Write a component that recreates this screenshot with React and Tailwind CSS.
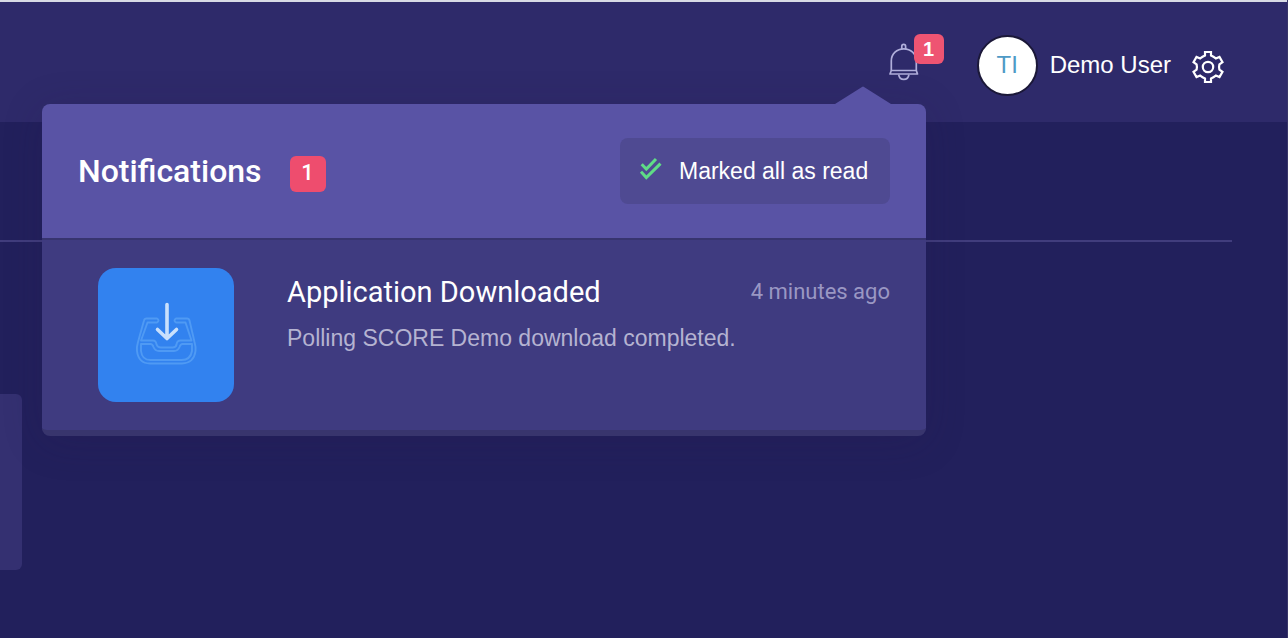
import React, { useState } from "react";

const BellIcon = () => (
  <svg width="30" height="38" viewBox="0 0 30 38" fill="none" stroke="#b1afdb" strokeWidth="1.7" aria-hidden="true">
    <path d="M12.800 6V3.200a1.900 1.900 0 0 1 3.800 0V6" />
    <path d="M2.300 27.500V18C2.300 10.500 8 5.800 14.800 5.800S27.300 10.500 27.300 18v9.500" />
    <path d="M2.300 27.500H27.300L28.500 31H1Z" strokeLinejoin="round" />
    <path d="M9.700 31.600c.4 3 2.500 4.800 5.100 4.800s4.700-1.800 5.100-4.800" />
  </svg>
);

const GearIcon = () => (
  <svg width="34" height="34" viewBox="-17 -17 34 34" fill="none" stroke="#fff" strokeWidth="2.2" strokeLinejoin="miter" aria-hidden="true">
    <path d="M-3-15H3V-11.500Q5.500-10.400 7.800-8.600L11.500-10.100L14.500-4.900L11.400-2.600Q10.700 0 11.400 2.600L14.500 4.900L11.500 10.100L7.800 8.600Q5.500 10.400 3 11.500V15H-3V11.500Q-5.500 10.400-7.800 8.600L-11.500 10.100L-14.500 4.900L-11.400 2.600Q-10.700 0-11.400-2.600L-14.500-4.900L-11.500-10.100L-7.800-8.600Q-5.500-10.400-3-11.500Z" />
    <circle r="5.200" />
  </svg>
);

const DoubleCheckIcon = () => (
  <svg className="mb-1" width="22" height="24" viewBox="0 0 22 24" fill="none" stroke="#5fdc86" strokeWidth="3" aria-hidden="true">
    <path d="M1.700 7.300L6.300 12L16 2" />
    <path d="M1 14.700L6.300 20.500L20.500 6.700" />
  </svg>
);

const DownloadIcon = () => (
  <svg width="64" height="66" viewBox="0 0 64 66" fill="none" strokeLinecap="round" strokeLinejoin="round" aria-hidden="true">
    {/* tray */}
    <g stroke="#4f9af4" strokeWidth="1.900">
      <path d="M23 16.500H12.500Q10.500 16.500 10 18.500L4 40Q2.500 45 3 49Q4.500 61.500 16 61.500H48Q60 61 61.500 49Q62 45 60.500 40L55.500 18.500Q55 16.500 53 16.500H42Q39 18.500 42 20.500H51.500L57.500 38.500H46.500Q43 38.500 42.500 42.500Q42 45.500 38.500 45.500H27Q23.500 45.500 22.500 42.500Q22 38.500 19 38.500H7L13.500 20.500H23Q26 18.500 23 16.500Z" />
      <path d="M7 42H16.500Q18.500 42 19.500 45Q21 49 25 49H40Q44 49 45.500 45Q46.500 42 48.500 42H58V49Q56.500 58 47.500 58H16.500Q8 58 7 49Z" />
    </g>
    {/* arrow */}
    <path d="M33 2.500V36.500M23.500 27.500L33 36.500L42.500 27.500" stroke="#c9e0fc" strokeWidth="3.600" />
  </svg>
);

const notifications = [
  {
    id: 1,
    title: "Application Downloaded",
    message: "Polling SCORE Demo download completed.",
    time: "4 minutes ago",
  },
];

const NotificationPanel = ({ items }) => (
  <section
    aria-label="Notifications"
    className="absolute right-[361px] top-[102px] z-10 w-[884px] rounded-lg shadow-[0_6px_40px_rgba(40,26,74,0.2)]"
  >
    {/* pointer under the bell */}
    <svg className="absolute -top-[18px] right-[35px]" width="56" height="19" viewBox="0 0 56 19" aria-hidden="true">
      <path d="M0 19V18L27 1Q28 0 29 1L56 18V19Z" fill="#5953a5" />
    </svg>

    <div className="flex h-[136px] items-center justify-between rounded-t-lg border-b-2 border-[#37346f] bg-[#5953a5] px-9">
      <div className="flex items-center gap-7">
        <h2 className="font-[Roboto,sans-serif] text-[32px] font-medium leading-10 text-white">
          Notifications
        </h2>
        <span className="mt-1.5 flex size-9 items-center justify-center rounded-md bg-[#ee4d6e] pb-1 font-[Roboto,sans-serif] text-[22px] font-medium text-white">
          {items.length}
        </span>
      </div>
      <button
        type="button"
        className="flex h-[66px] w-[270px] items-center gap-[17px] rounded-lg bg-[#4f4a92] pl-5 text-[23px] text-white"
      >
        <DoubleCheckIcon />
        <span>Marked all as read</span>
      </button>
    </div>

    <ul className="rounded-b-lg border-b-[6px] border-[#38356d] bg-[#3f3b80]">
      {items.map((item) => (
        <li key={item.id} className="flex h-[190px] items-start gap-[53px] pl-14 pr-9 pt-7">
          <div className="flex h-[134px] w-[136px] shrink-0 items-center justify-center rounded-[18px] bg-[#3282ef]">
            <DownloadIcon />
          </div>
          <div className="flex-1">
            <div className="flex items-center justify-between pt-1">
              <h3 className="font-[Roboto,sans-serif] text-[29px] leading-10 text-white">{item.title}</h3>
              <time className="font-[Roboto,sans-serif] text-[22px] leading-10 text-[#9a97c3]">{item.time}</time>
            </div>
            <p className="mt-2 text-[23px] leading-9 text-[#b5b3d1]">{item.message}</p>
          </div>
        </li>
      ))}
    </ul>
  </section>
);

const Header = () => {
  const [open, setOpen] = useState(true);

  return (
    <header className="relative flex h-[122px] justify-end border-t-2 border-[#d8dae5] bg-[#2e2a6a] pr-[62px]">
      <div className="flex h-[126px] items-center">
        <button
          type="button"
          aria-label="Notifications"
          onClick={() => setOpen(!open)}
          className="relative mb-1.5 mr-[58px]"
        >
          <BellIcon />
          <span className="absolute -right-[25px] -top-[9px] flex size-[30px] items-center justify-center rounded-md bg-[#ee5472] text-xl font-bold text-white">
            {notifications.length}
          </span>
        </button>
        <div className="flex size-[61px] items-center justify-center rounded-full border-2 border-[#1b1838] bg-white text-2xl text-[#4e9ac6]">
          TI
        </div>
        <span className="ml-3 text-2xl text-white">Demo User</span>
        <button type="button" aria-label="Settings" className="ml-5 mt-1">
          <GearIcon />
        </button>
      </div>
      {open && <NotificationPanel items={notifications} />}
    </header>
  );
};

export default function App() {
  return (
    <div className="min-h-screen border-r border-[#383569] bg-[#22205c] font-['Liberation_Sans',Arial,sans-serif]">
      <Header />
      <main className="pt-[118px]">
        <hr className="mr-[55px] border-t-2 border-[#413d7d]" />
        <div className="mt-[152px] h-[176px] w-[22px] rounded-r-md bg-[#343071]" />
      </main>
    </div>
  );
}
